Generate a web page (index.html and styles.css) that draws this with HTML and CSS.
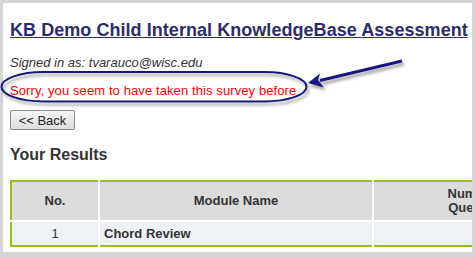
FILE: index.html
```html
<!DOCTYPE html>
<html>
<head>
<meta charset="utf-8">
<link rel="stylesheet" href="styles.css">
</head>
<body>
<div class="page">
  <h1 class="title">KB Demo Child Internal KnowledgeBase Assessment</h1>
  <p class="signed">Signed in as: tvarauco@wisc.edu</p>
  <p class="sorry">Sorry, you seem to have taken this survey before</p>
  <button class="back">&lt;&lt; Back</button>
  <h2 class="results">Your Results</h2>
  <table class="grid">
    <thead>
      <tr>
        <th class="c-no">No.</th>
        <th class="c-name">Module Name</th>
        <th class="c-num">Number of<br>Questions</th>
      </tr>
    </thead>
    <tbody>
      <tr>
        <td class="c-no">1</td>
        <td class="c-name name">Chord Review</td>
        <td class="c-num"></td>
      </tr>
    </tbody>
  </table>
</div>
<svg class="annot" width="475" height="258" viewBox="0 0 475 258">
  <defs>
    <filter id="sh" x="-10%" y="-50%" width="120%" height="200%">
      <feDropShadow dx="2" dy="3" stdDeviation="1.8" flood-color="#777" flood-opacity="0.7"/>
    </filter>
  </defs>
  <g filter="url(#sh)" fill="none" stroke="#13137e">
    <rect x="1.5" y="72" width="305" height="29.5" rx="42" ry="15" stroke-width="2"/>
    <line x1="402" y1="61" x2="320" y2="80.5" stroke-width="3"/>
    <polygon points="308,83 320,73.5 318,80 324,87.5" fill="#13137e" stroke="none"/>
  </g>
</svg>
</body>
</html>
```
FILE: styles.css
```css
html, body {
  margin: 0;
  padding: 0;
}
body {
  width: 475px;
  height: 258px;
  background: #d5d5d5;
  position: relative;
  overflow: hidden;
  font-family: "Liberation Sans", Arial, sans-serif;
}
.page {
  margin: 3px 3px 0 3px;
  width: 469px;
  height: 249px;
  background: #fff;
  box-sizing: border-box;
  padding: 1px 0 0 7px;
  overflow: hidden;
}
.title {
  margin: 15px 0 0 0;
  font-size: 18px;
  line-height: 22px;
  font-weight: bold;
  color: #2c2c6c;
  text-decoration: underline;
  white-space: nowrap;
  letter-spacing: 0.05px;
}
.signed {
  margin: 14px 0 0 0;
  font-size: 13px;
  line-height: 16px;
  font-style: italic;
  color: #333;
}
.sorry {
  margin: 12px 0 0 0;
  font-size: 13px;
  line-height: 16px;
  color: #ff0000;
  letter-spacing: 0.1px;
}
.back {
  display: block;
  margin: 11px 0 0 0;
  width: 65px;
  height: 20px;
  padding: 0;
  font-family: "Liberation Sans", Arial, sans-serif;
  font-size: 13px;
  color: #222;
  border: 1px solid #8a8a8a;
  border-radius: 2px;
  background: linear-gradient(#f6f6f6, #dedede);
}
.results {
  margin: 15px 0 0 0;
  font-size: 16px;
  line-height: 20px;
  font-weight: bold;
  color: #333;
}
.grid {
  margin-top: 15px;
  border-collapse: collapse;
  border: 2px solid #99bf1a;
  table-layout: fixed;
  width: 572px;
  font-size: 13px;
  color: #333;
}
.grid th {
  background: #dcdcdc;
  font-weight: bold;
  height: 38px;
  padding: 0;
  border-right: 2px solid #fff;
  border-bottom: 2px solid #fff;
  line-height: 14px;
}
.grid td {
  background: #eef2f7;
  height: 23px;
  padding: 0;
  border-right: 2px solid #fff;
}
.c-no {
  width: 86px;
  text-align: center;
}
.grid .c-name {
  width: 272px;
}
.grid td.name {
  text-align: left;
  padding-left: 4px;
  font-weight: bold;
}
.c-num {
  width: 212px;
  text-align: center;
}
.annot {
  position: absolute;
  left: 0;
  top: 0;
}
```
